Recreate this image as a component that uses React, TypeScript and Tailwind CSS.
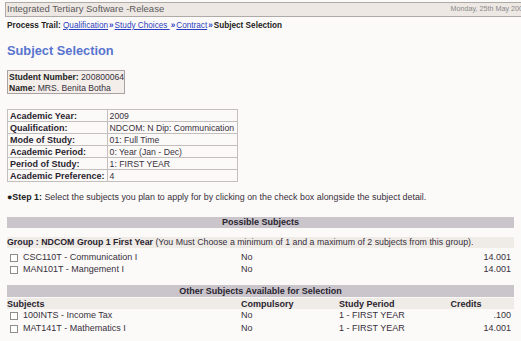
import React from 'react';

const details: [string, string][] = [
  ['Academic Year:', '2009'],
  ['Qualification:', 'NDCOM: N Dip: Communication'],
  ['Mode of Study:', '01: Full Time'],
  ['Academic Period:', '0: Year (Jan - Dec)'],
  ['Period of Study:', '1: FIRST YEAR'],
  ['Academic Preference:', '4'],
];

const groupSubjects = [
  { name: 'CSC110T - Communication I', comp: 'No', credits: '14.001' },
  { name: 'MAN101T - Mangement I', comp: 'No', credits: '14.001' },
];

const otherSubjects = [
  { name: '100INTS - Income Tax', comp: 'No', period: '1 - FIRST YEAR', credits: '.100' },
  { name: 'MAT141T - Mathematics I', comp: 'No', period: '1 - FIRST YEAR', credits: '14.001' },
];

const cols = 'grid grid-cols-[234px_98px_80px_94px] items-center';

const Check = () => (
  <span className="ml-[3px] mr-[5px] inline-block w-[8px] h-[8px] border border-[#8f8c8c] bg-white shrink-0" />
);

const Chev = () => <span className="text-[#2c3fc0] font-bold mx-[1px]">»</span>;

export default function App() {
  return (
    <div className="w-[521px] h-[341px] overflow-hidden bg-[#fcfaf8] font-['Liberation_Sans',Arial,sans-serif] text-[#37303d]">
      <div className="mt-[2px] ml-[5px] h-[15px] border-t border-b border-l border-[#aeaaa8] bg-[#ede8e4] flex items-center justify-between overflow-hidden pl-[1px]">
        <span className="text-[9.5px] text-[#5c5a5a] whitespace-nowrap">Integrated Tertiary Software -Release</span>
        <span className="text-[7.2px] text-[#8a8888] whitespace-nowrap mr-[-6px]">Monday, 25th May 2009</span>
      </div>

      <div className="mt-[4px] pl-[7px] h-[9px] leading-[9px] text-[8.2px] whitespace-nowrap text-[#222]">
        <span className="font-bold">Process Trail: </span>
        <span className="text-[#2c3fc0] underline">Qualification</span>
        <Chev />
        <span className="text-[#2c3fc0] underline">Study Choices </span>
        <Chev />
        <span className="text-[#2c3fc0] underline">Contract</span>
        <Chev />
        <span className="font-bold">Subject Selection</span>
      </div>

      <h1 className="mt-[13px] pl-[7px] h-[15px] leading-[15px] text-[12.8px] font-bold text-[#5874cf]">Subject Selection</h1>

      <div className="mt-[12px] ml-[7px] w-[118px] h-[24px] border border-[#aaa2a2] bg-[#f3eeea] px-[1px] py-[1px] text-[8.6px] leading-[11px] whitespace-nowrap overflow-hidden">
        <div><span className="font-bold text-[#222]">Student Number:</span> 200800064</div>
        <div><span className="font-bold text-[#222]">Name:</span> MRS. Benita Botha</div>
      </div>

      <table className="mt-[15px] ml-[7px] border-collapse border border-[#b4aeae] text-[9px]">
        <tbody>
          {details.map(([label, value]) => (
            <tr key={label} className="h-[12px]">
              <td className="w-[99px] border border-[#c4bebe] px-[2px] py-0 leading-[10px] font-bold text-[#2a2430] whitespace-nowrap">{label}</td>
              <td className="w-[130px] border border-[#c4bebe] px-[2px] py-0 leading-[10px] text-[8.7px] whitespace-nowrap">{value}</td>
            </tr>
          ))}
        </tbody>
      </table>

      <div className="mt-[10px] pl-[7px] h-[10px] leading-[10px] text-[8.9px] whitespace-nowrap">
        <span className="font-bold text-[#222]">●Step 1:</span> Select the subjects you plan to apply for by clicking on the check box alongside the subject detail.
      </div>

      <div className="mt-[15px] mx-[7px] h-[11px] leading-[11px] bg-[#c9c5cb] text-center text-[9px] font-bold text-[#2a2430]">Possible Subjects</div>

      <div className="mt-[9px] mx-[7px] h-[11px] leading-[11px] bg-[#efebe6] text-[8.8px] whitespace-nowrap">
        <span className="font-bold text-[#2a2430]">Group : NDCOM Group 1 First Year</span> (You Must Choose a minimum of 1 and a maximum of 2 subjects from this group).
      </div>

      <div className="mt-[3px] mx-[7px] text-[9px]">
        {groupSubjects.map((s) => (
          <div key={s.name} className={`${cols} h-[12px]`}>
            <div className="flex items-center whitespace-nowrap"><Check />{s.name}</div>
            <div>{s.comp}</div>
            <div />
            <div className="text-right pr-[2px]">{s.credits}</div>
          </div>
        ))}
      </div>

      <div className="mt-[10px] mx-[7px] h-[12px] leading-[12px] bg-[#c9c5cb] text-center text-[9px] font-bold text-[#2a2430]">Other Subjects Available for Selection</div>

      <div className="mt-[1px] mx-[7px] text-[9px]">
        <div className={`${cols} h-[11px] bg-[#efebe6] font-bold text-[#2a2430]`}>
          <div>Subjects</div>
          <div>Compulsory</div>
          <div>Study Period</div>
          <div className="text-center">Credits</div>
        </div>
        {otherSubjects.map((s) => (
          <div key={s.name} className={`${cols} h-[13px]`}>
            <div className="flex items-center whitespace-nowrap"><Check />{s.name}</div>
            <div>{s.comp}</div>
            <div className="whitespace-nowrap">{s.period}</div>
            <div className="text-right pr-[2px]">{s.credits}</div>
          </div>
        ))}
      </div>
    </div>
  );
}
